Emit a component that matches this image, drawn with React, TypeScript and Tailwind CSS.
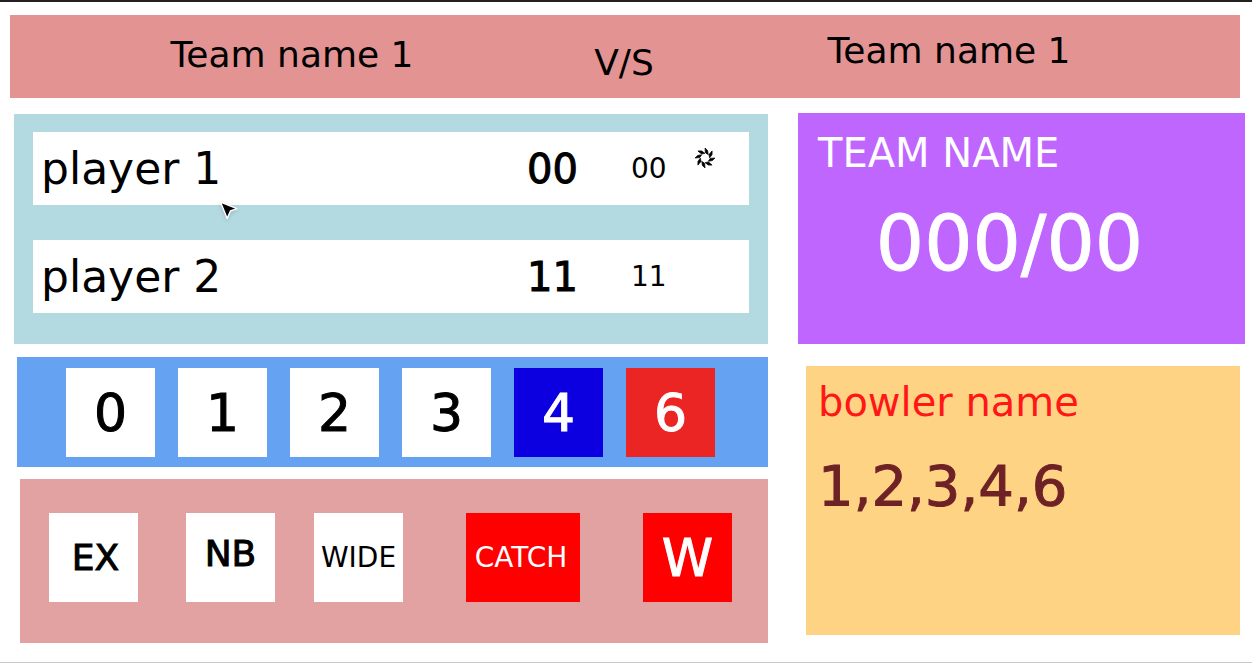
import React from "react";

type Batter = { name: string; runs: string; balls: string; onStrike: boolean };

const batters: Batter[] = [
  { name: "player 1", runs: "00", balls: "00", onStrike: true },
  { name: "player 2", runs: "11", balls: "11", onStrike: false },
];

const runButtons = [
  { label: "0", tone: "bg-white text-black" },
  { label: "1", tone: "bg-white text-black" },
  { label: "2", tone: "bg-white text-black" },
  { label: "3", tone: "bg-white text-black" },
  { label: "4", tone: "bg-[#0d00e0] text-white" },
  { label: "6", tone: "bg-[#eb2524] text-white" },
];

const petals = [0, 45, 90, 135, 180, 225, 270, 315];

function StrikeMark() {
  return (
    <svg viewBox="-10 -10 20 20" className="size-5" role="img" aria-label="On strike">
      {petals.map((angle) => (
        <path key={angle} d="M0 -10 L2.6 -7.4 L3.2 -3.4 L0.4 -5.2 Z" stroke="#000" strokeWidth="0.7" transform={`rotate(${angle})`} />
      ))}
    </svg>
  );
}

function Pointer() {
  return (
    <svg viewBox="0 0 20 20" className="absolute left-[205px] top-[86px] size-5 drop-shadow-sm" aria-hidden="true">
      <path d="M1.5 2 L18 8.6 L11.4 11 L8.2 18.4 Z" fill="#000" stroke="#fff" strokeWidth="1.4" strokeLinejoin="round" />
    </svg>
  );
}

function BatterRow({ name, runs, balls, onStrike }: Batter) {
  return (
    <li className="grid h-[73px] grid-cols-[1fr_104px_64px_54px] items-center bg-white pl-2">
      <span className="text-[44px] leading-none">{name}</span>
      <span className="text-[40px] leading-none [-webkit-text-stroke:1px]">{runs}</span>
      <span className="text-[28px] leading-none">{balls}</span>
      <span className="pb-[22px]">{onStrike && <StrikeMark />}</span>
    </li>
  );
}

export default function App() {
  return (
    <div className="flex min-h-screen flex-col border-b border-t-2 border-b-[#c8c8c8] border-t-[#231f20] bg-white font-['DejaVu_Sans',sans-serif] text-black">
      <header className="ml-[10px] mr-3 mt-[13px] grid h-[83px] grid-cols-[564fr_100fr_566fr] items-center bg-[#e49393] text-center text-[36px] leading-none">
        <h2 className="pb-1">Team name 1</h2>
        <span className="pt-3">V/S</span>
        <h2 className="pb-3 pr-4">Team name 1</h2>
      </header>

      <main className="ml-[14px] mr-[7px] mt-[15px] grid grow grid-cols-[754fr_447fr] gap-[30px] pb-[19px]">
        <div className="flex min-w-0 flex-col pt-px">
          <section aria-label="Batters" className="relative bg-[#b3d9e1] px-[19px] pb-[31px] pt-[18px]">
            <ul className="flex flex-col gap-[35px]">
              {batters.map((b) => (
                <BatterRow key={b.name} {...b} />
              ))}
            </ul>
            <Pointer />
          </section>

          <section aria-label="Runs" className="ml-[3px] mt-[13px] flex items-center justify-center gap-[23px] bg-[#66a2f2] pb-[10px] pr-1 pt-[11px]">
            {runButtons.map((b) => (
              <button key={b.label} type="button" className={`size-[89px] text-[52px] leading-none [-webkit-text-stroke:1px] ${b.tone}`}>
                {b.label}
              </button>
            ))}
          </section>

          <section aria-label="Extras and wickets" className="ml-[6px] mt-3 flex grow items-start bg-[#e2a2a2] pl-[29px] pt-[34px]">
            <button type="button" className="mr-12 size-[89px] bg-white pl-1 text-[36px] leading-none [-webkit-text-stroke:1px]">EX</button>
            <button type="button" className="mr-[39px] size-[89px] bg-white pb-2 text-[36px] leading-none [-webkit-text-stroke:1px]">NB</button>
            <button type="button" className="mr-[63px] size-[89px] bg-white text-[28px] leading-none">WIDE</button>
            <button type="button" className="mr-[63px] h-[89px] w-[114px] bg-[#ff0000] pr-1 text-[28px] leading-none text-white">CATCH</button>
            <button type="button" className="size-[89px] bg-[#ff0000] text-[52px] leading-none text-white [-webkit-text-stroke:1px]">W</button>
          </section>
        </div>

        <div className="flex min-w-0 flex-col pb-2">
          <section aria-label="Team score" className="h-[231px] bg-[#bf66ff] pl-5 pt-5 text-white">
            <h2 className="text-[40px] leading-10">TEAM NAME</h2>
            <p className="pr-11 pt-[33px] text-center text-[76px] leading-[76px] [-webkit-text-stroke:1px]">000/00</p>
          </section>

          <section aria-label="Bowler" className="ml-2 mr-[5px] mt-[22px] grow bg-[#ffd384] pl-3 pt-4">
            <h2 className="text-[40px] leading-10 text-[#ff1616]">bowler name</h2>
            <p className="pt-9 text-[56px] leading-[56px] text-[#6e2226] [-webkit-text-stroke:1px]">1,2,3,4,6</p>
          </section>
        </div>
      </main>
    </div>
  );
}
